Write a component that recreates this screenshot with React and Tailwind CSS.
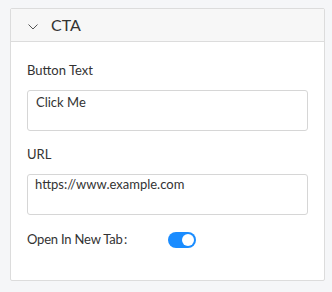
export default function App() {
  return (
    <div className="w-[332px] h-[292px] bg-[#f5f6f8] pt-[8px] px-[10px]" style={{ fontFamily: "Lato, 'Noto Sans', sans-serif" }}>
      <div className="w-[315px] h-[273px] border border-[#dcdcdc] bg-white rounded-[2px] flex flex-col">
        <div className="h-[33px] bg-[#f7f7f7] border-b border-[#dcdcdc] flex items-center pl-[17px]">
          <svg width="10" height="6" viewBox="0 0 10 6" fill="none" className="mt-[3px]">
            <path d="M0.5 0.5 L5 5 L9.5 0.5" stroke="#555" strokeWidth="1" />
          </svg>
          <span className="ml-[13px] text-[16px] text-[#333] leading-none">CTA</span>
        </div>
        <div className="px-[16px] pt-[20px] flex flex-col">
          <div className="text-[13px] text-[#333] leading-[16px]">Button Text</div>
          <div className="mt-[12px] h-[41px] w-[281px] border border-[#d6d6d6] rounded-[3px] px-[8px] pt-[3px] text-[13px] text-[#333] leading-[16px]">Click Me</div>
          <div className="mt-[15px] text-[13px] text-[#333] leading-[16px]">URL</div>
          <div className="mt-[12px] h-[41px] w-[281px] border border-[#d6d6d6] rounded-[3px] px-[7px] pt-[1px] text-[13px] text-[#333] leading-[16px]">https://www.example.com</div>
          <div className="mt-[16px] flex items-start">
            <span className="text-[13px] text-[#333] leading-[16px] w-[141px] tracking-[-0.2px]">Open In New Tab{"\u2009"}:</span>
            <div className="w-[28px] h-[16px] rounded-full bg-[#1a8cff] flex items-center justify-end pr-[2px] mt-[1px]">
              <div className="w-[12px] h-[12px] rounded-full bg-white" />
            </div>
          </div>
        </div>
      </div>
    </div>
  );
}
